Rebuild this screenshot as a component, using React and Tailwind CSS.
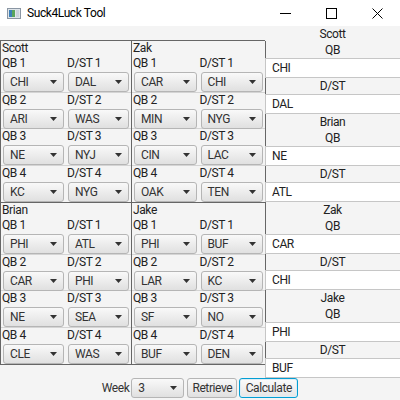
import React from "react";

const teams = [
  { name: "Scott", qb: ["CHI", "ARI", "NE", "KC"], dst: ["DAL", "WAS", "NYJ", "NYG"] },
  { name: "Zak", qb: ["CAR", "MIN", "CIN", "OAK"], dst: ["CHI", "NYG", "LAC", "TEN"] },
  { name: "Brian", qb: ["PHI", "CAR", "NE", "CLE"], dst: ["ATL", "PHI", "SEA", "WAS"] },
  { name: "Jake", qb: ["PHI", "LAR", "SF", "BUF"], dst: ["BUF", "KC", "NO", "DEN"] },
];

const results = [
  { name: "Scott", qb: "CHI", dst: "DAL" },
  { name: "Brian", qb: "NE", dst: "ATL" },
  { name: "Zak", qb: "CAR", dst: "CHI" },
  { name: "Jake", qb: "PHI", dst: "BUF" },
];

function Arrow() {
  return (
    <svg width="7" height="4" viewBox="0 0 7 4" className="shrink-0">
      <path d="M0 0H7L3.5 4Z" fill="#333" />
    </svg>
  );
}

function Combo({ value }) {
  return (
    <div className="mx-[2px] mt-[1px] flex h-[20px] items-center justify-between rounded-[3px] border border-[#b5b5b5] bg-gradient-to-b from-[#f9f9f9] to-[#e0e0e0] pl-[6px] pr-[6px] leading-[14px] text-[#333]">
      <span>{value}</span>
      <Arrow />
    </div>
  );
}

function Block({ team }) {
  return (
    <div className="border-b border-r border-[#666]">
      <div className="h-[15px] pl-[1px] leading-[15px]">{team.name}</div>
      {team.qb.map((q, i) => (
        <React.Fragment key={i}>
          <div className="grid h-[15px] grid-cols-2 leading-[15px]">
            <div className="pl-[1px]">QB {i + 1}</div>
            <div className="pl-[1px]">D/ST {i + 1}</div>
          </div>
          <div className={"grid h-[21.5px] grid-cols-2 " + (i < 3 ? "border-b border-[#d4d4d4]" : "")}>
            <Combo value={q} />
            <Combo value={team.dst[i]} />
          </div>
        </React.Fragment>
      ))}
    </div>
  );
}

function Label({ children }) {
  return <div className="h-[16px] text-center leading-[16px]">{children}</div>;
}

function Field({ value }) {
  return (
    <div className="flex h-[20px] items-center border-y border-l border-[#c6c6c6] bg-white pl-[6px] leading-[14px] text-[#222]">
      {value}
    </div>
  );
}

export default function App() {
  return (
    <div className="flex h-[400px] w-[400px] flex-col overflow-hidden bg-[#f4f4f4] font-['Roboto',sans-serif] text-[12px] tracking-[-0.4px] text-[#222]">
      {/* title bar */}
      <div className="flex h-[26px] items-center bg-white">
        <svg width="14" height="11" viewBox="0 0 14 11" className="ml-[7px] mr-[6px]">
          <rect x="0.5" y="0.5" width="13" height="10" fill="#dfe5ea" stroke="#8a96a3" />
          <rect x="2" y="2" width="3" height="7" fill="#3c7fb8" />
          <rect x="5" y="2" width="3" height="7" fill="#58a55c" />
          <rect x="9" y="2" width="3" height="7" fill="#c9d3dc" />
        </svg>
        <span className="text-[12px] text-black">Suck4Luck Tool</span>
        <div className="ml-auto flex h-full items-center">
          <div className="flex w-[46px] items-center justify-center">
            <svg width="11" height="11" viewBox="0 0 11 11">
              <path d="M0 5.5H11" stroke="#000" strokeWidth="1" />
            </svg>
          </div>
          <div className="flex w-[46px] items-center justify-center">
            <svg width="11" height="11" viewBox="0 0 11 11">
              <rect x="0.5" y="0.5" width="10" height="10" fill="none" stroke="#000" strokeWidth="1" />
            </svg>
          </div>
          <div className="flex w-[46px] items-center justify-center">
            <svg width="11" height="11" viewBox="0 0 11 11">
              <path d="M0.5 0.5L10.5 10.5M10.5 0.5L0.5 10.5" stroke="#000" strokeWidth="1" />
            </svg>
          </div>
        </div>
      </div>

      {/* main */}
      <div className="flex h-[352px]">
        <div className="w-[265px] shrink-0 pt-[14px]">
          <div className="grid grid-cols-[131px_134px] border-l border-t border-[#666]">
            {teams.map((t) => (
              <Block key={t.name} team={t} />
            ))}
          </div>
        </div>
        <div className="flex flex-1 flex-col">
          {results.map((r) => (
            <React.Fragment key={r.name}>
              <Label>{r.name}</Label>
              <Label>QB</Label>
              <Field value={r.qb} />
              <Label>D/ST</Label>
              <Field value={r.dst} />
            </React.Fragment>
          ))}
        </div>
      </div>

      {/* bottom bar */}
      <div className="flex h-[22px] items-start justify-center">
        <div className="flex h-[20px] items-center pr-[2px] text-[#333]">Week</div>
        <div className="flex h-[20px] w-[53px] items-center justify-between rounded-[3px] border border-[#b5b5b5] bg-gradient-to-b from-[#f9f9f9] to-[#e0e0e0] pl-[6px] pr-[6px] text-[#333]">
          <span>3</span>
          <Arrow />
        </div>
        <div className="ml-[3px] flex h-[20px] w-[50px] items-center justify-center rounded-[3px] border border-[#b5b5b5] bg-gradient-to-b from-[#f9f9f9] to-[#e0e0e0] text-[#333]">
          Retrieve
        </div>
        <div className="ml-[2px] flex h-[20px] w-[59px] items-center justify-center rounded-[3px] border border-[#039ed3] bg-gradient-to-b from-[#fbfbfb] to-[#e6e6e6] text-[#333] shadow-[inset_0_0_0_1px_#dcecf5]">
          Calculate
        </div>
      </div>
    </div>
  );
}
